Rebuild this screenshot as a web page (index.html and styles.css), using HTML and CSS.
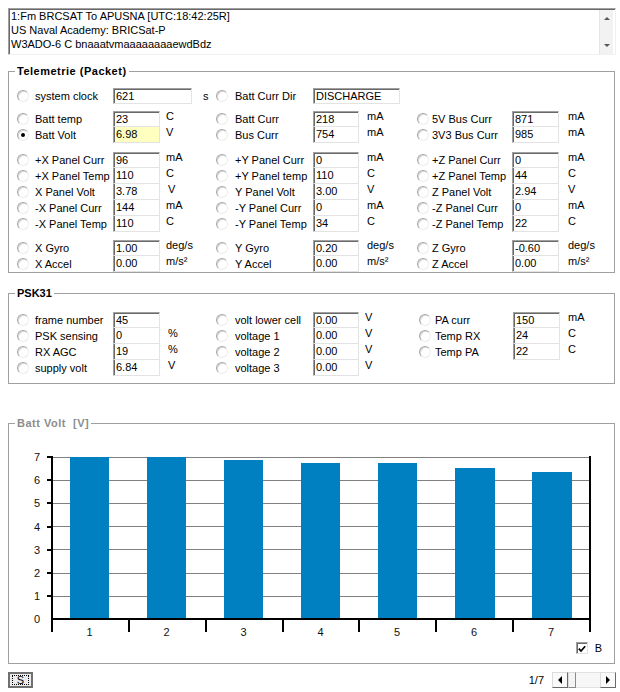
FILE: index.html
```html
<!DOCTYPE html>
<html>
<head>
<meta charset="utf-8">
<title>Telemetrie</title>
<link rel="stylesheet" href="styles.css">
</head>
<body>
<div class="app">
  <div class="log">
    <div class="log-text">
      <div>1:Fm BRCSAT To APUSNA [UTC:18:42:25R]</div>
      <div>US Naval Academy: BRICSat-P</div>
      <div>W3ADO-6 C bnaaatvmaaaaaaaaewdBdz</div>
    </div>
    <div class="vscroll"><span class="arr-up"></span><span class="arr-down"></span></div>
  </div>

  <div class="group tele">
    <span class="legend">Telemetrie (Packet)</span>
    <div class="blk b0">
      <div class="row">
        <div class="cell c1"><span class="radio"></span><span class="lbl">system clock</span><span class="box w79">621</span><span class="unit us">s</span></div>
        <div class="cell c2"><span class="radio"></span><span class="lbl">Batt Curr Dir</span><span class="box w87">DISCHARGE</span></div>
        <div class="cell c3"></div>
      </div>
    </div>
    <div class="blk bA">
      <div class="row">
        <div class="cell c1"><span class="radio"></span><span class="lbl">Batt temp</span><span class="box">23</span><span class="unit">C</span></div>
        <div class="cell c2"><span class="radio"></span><span class="lbl">Batt Curr</span><span class="box">218</span><span class="unit">mA</span></div>
        <div class="cell c3"><span class="radio"></span><span class="lbl">5V Bus Curr</span><span class="box">871</span><span class="unit">mA</span></div>
      </div>
      <div class="row">
        <div class="cell c1"><span class="radio on"></span><span class="lbl">Batt Volt</span><span class="box yel">6.98</span><span class="unit">V</span></div>
        <div class="cell c2"><span class="radio"></span><span class="lbl">Bus Curr</span><span class="box">754</span><span class="unit">mA</span></div>
        <div class="cell c3"><span class="radio"></span><span class="lbl">3V3 Bus Curr</span><span class="box">985</span><span class="unit">mA</span></div>
      </div>
    </div>
    <div class="blk bB">
      <div class="row">
        <div class="cell c1"><span class="radio"></span><span class="lbl">+X Panel Curr</span><span class="box">96</span><span class="unit">mA</span></div>
        <div class="cell c2"><span class="radio"></span><span class="lbl">+Y Panel Curr</span><span class="box">0</span><span class="unit">mA</span></div>
        <div class="cell c3"><span class="radio"></span><span class="lbl">+Z Panel Curr</span><span class="box">0</span><span class="unit">mA</span></div>
      </div>
      <div class="row">
        <div class="cell c1"><span class="radio"></span><span class="lbl">+X Panel Temp</span><span class="box">110</span><span class="unit">C</span></div>
        <div class="cell c2"><span class="radio"></span><span class="lbl">+Y Panel temp</span><span class="box">110</span><span class="unit">C</span></div>
        <div class="cell c3"><span class="radio"></span><span class="lbl">+Z Panel Temp</span><span class="box">44</span><span class="unit">C</span></div>
      </div>
      <div class="row">
        <div class="cell c1"><span class="radio"></span><span class="lbl">X Panel Volt</span><span class="box">3.78</span><span class="unit uv">V</span></div>
        <div class="cell c2"><span class="radio"></span><span class="lbl">Y Panel Volt</span><span class="box">3.00</span><span class="unit">V</span></div>
        <div class="cell c3"><span class="radio"></span><span class="lbl">Z Panel Volt</span><span class="box">2.94</span><span class="unit">V</span></div>
      </div>
      <div class="row">
        <div class="cell c1"><span class="radio"></span><span class="lbl">-X Panel Curr</span><span class="box">144</span><span class="unit">mA</span></div>
        <div class="cell c2"><span class="radio"></span><span class="lbl">-Y Panel Curr</span><span class="box">0</span><span class="unit">mA</span></div>
        <div class="cell c3"><span class="radio"></span><span class="lbl">-Z Panel Curr</span><span class="box">0</span><span class="unit">mA</span></div>
      </div>
      <div class="row">
        <div class="cell c1"><span class="radio"></span><span class="lbl">-X Panel Temp</span><span class="box">110</span><span class="unit">C</span></div>
        <div class="cell c2"><span class="radio"></span><span class="lbl">-Y Panel Temp</span><span class="box">34</span><span class="unit">C</span></div>
        <div class="cell c3"><span class="radio"></span><span class="lbl">-Z Panel Temp</span><span class="box">22</span><span class="unit">C</span></div>
      </div>
    </div>
    <div class="blk bC">
      <div class="row">
        <div class="cell c1"><span class="radio"></span><span class="lbl">X Gyro</span><span class="box">1.00</span><span class="unit">deg/s</span></div>
        <div class="cell c2"><span class="radio"></span><span class="lbl">Y Gyro</span><span class="box">0.20</span><span class="unit">deg/s</span></div>
        <div class="cell c3"><span class="radio"></span><span class="lbl">Z Gyro</span><span class="box">-0.60</span><span class="unit">deg/s</span></div>
      </div>
      <div class="row">
        <div class="cell c1"><span class="radio"></span><span class="lbl">X Accel</span><span class="box">0.00</span><span class="unit">m/s²</span></div>
        <div class="cell c2"><span class="radio"></span><span class="lbl">Y Accel</span><span class="box">0.00</span><span class="unit">m/s²</span></div>
        <div class="cell c3"><span class="radio"></span><span class="lbl">Z Accel</span><span class="box">0.00</span><span class="unit">m/s²</span></div>
      </div>
    </div>
  </div>

  <div class="group psk">
    <span class="legend">PSK31</span>
    <div class="blk">
      <div class="row">
        <div class="cell c1"><span class="radio"></span><span class="lbl">frame number</span><span class="box">45</span></div>
        <div class="cell c2"><span class="radio"></span><span class="lbl">volt lower cell</span><span class="box">0.00</span><span class="unit">V</span></div>
        <div class="cell c3"><span class="radio"></span><span class="lbl">PA curr</span><span class="box">150</span><span class="unit">mA</span></div>
      </div>
      <div class="row">
        <div class="cell c1"><span class="radio"></span><span class="lbl">PSK sensing</span><span class="box">0</span><span class="unit">%</span></div>
        <div class="cell c2"><span class="radio"></span><span class="lbl">voltage 1</span><span class="box">0.00</span><span class="unit">V</span></div>
        <div class="cell c3"><span class="radio"></span><span class="lbl">Temp RX</span><span class="box">24</span><span class="unit">C</span></div>
      </div>
      <div class="row">
        <div class="cell c1"><span class="radio"></span><span class="lbl">RX AGC</span><span class="box">19</span><span class="unit">%</span></div>
        <div class="cell c2"><span class="radio"></span><span class="lbl">voltage 2</span><span class="box">0.00</span><span class="unit">V</span></div>
        <div class="cell c3"><span class="radio"></span><span class="lbl">Temp PA</span><span class="box">22</span><span class="unit">C</span></div>
      </div>
      <div class="row">
        <div class="cell c1"><span class="radio"></span><span class="lbl">supply volt</span><span class="box">6.84</span><span class="unit">V</span></div>
        <div class="cell c2"><span class="radio"></span><span class="lbl">voltage 3</span><span class="box">0.00</span><span class="unit">V</span></div>
        <div class="cell c3"></div>
      </div>
    </div>
  </div>

  <div class="group chart">
    <span class="legend">Batt Volt&nbsp; [V]</span>
    <svg class="plot" width="605" height="216" viewBox="9 424 605 216" xmlns="http://www.w3.org/2000/svg">
      <g stroke="#808080" stroke-width="1">
        <line x1="53" y1="480.5" x2="589" y2="480.5"/>
        <line x1="53" y1="503.5" x2="589" y2="503.5"/>
        <line x1="53" y1="526.5" x2="589" y2="526.5"/>
        <line x1="53" y1="549.5" x2="589" y2="549.5"/>
        <line x1="53" y1="573.5" x2="589" y2="573.5"/>
        <line x1="53" y1="596.5" x2="589" y2="596.5"/>
        <line x1="53" y1="457.5" x2="589" y2="457.5"/>
      </g>
      <g fill="#007fc1">
        <rect x="70" y="457" width="39" height="162"/>
        <rect x="147" y="457" width="39" height="162"/>
        <rect x="224" y="460" width="39" height="159"/>
        <rect x="301" y="463" width="39" height="156"/>
        <rect x="378" y="463" width="39" height="156"/>
        <rect x="455" y="468" width="40" height="151"/>
        <rect x="532" y="472" width="40" height="147"/>
      </g>
      <g stroke="#000" stroke-width="2">
        <line x1="52" y1="456" x2="52" y2="620"/>
        <line x1="590" y1="456" x2="590" y2="632"/>
        <line x1="51" y1="619" x2="591" y2="619"/>
        <line x1="47" y1="457" x2="52" y2="457"/>
        <line x1="47" y1="480" x2="52" y2="480"/>
        <line x1="47" y1="503" x2="52" y2="503"/>
        <line x1="47" y1="527" x2="52" y2="527"/>
        <line x1="47" y1="550" x2="52" y2="550"/>
        <line x1="47" y1="573" x2="52" y2="573"/>
        <line x1="47" y1="596" x2="52" y2="596"/>
        <line x1="52" y1="619" x2="52" y2="632"/>
        <line x1="129" y1="619" x2="129" y2="632"/>
        <line x1="206" y1="619" x2="206" y2="632"/>
        <line x1="283" y1="619" x2="283" y2="632"/>
        <line x1="359" y1="619" x2="359" y2="632"/>
        <line x1="436" y1="619" x2="436" y2="632"/>
        <line x1="513" y1="619" x2="513" y2="632"/>
      </g>
      <g class="ylab" text-anchor="end">
        <text x="40" y="461">7</text>
        <text x="40" y="484">6</text>
        <text x="40" y="507">5</text>
        <text x="40" y="531">4</text>
        <text x="40" y="554">3</text>
        <text x="40" y="577">2</text>
        <text x="40" y="600">1</text>
        <text x="40" y="623">0</text>
      </g>
      <g class="xlab" text-anchor="middle">
        <text x="89.5" y="636">1</text>
        <text x="166.5" y="636">2</text>
        <text x="243.5" y="636">3</text>
        <text x="320.5" y="636">4</text>
        <text x="397" y="636">5</text>
        <text x="474" y="636">6</text>
        <text x="551" y="636">7</text>
      </g>
    </svg>
    <div class="chk-row">
      <span class="chk"><svg width="8" height="8" viewBox="0 0 8 8"><path d="M0.8 3.6 L3 6 L7.2 1.2" fill="none" stroke="#000" stroke-width="1.7"/></svg></span>
      <span class="chk-lbl">B</span>
    </div>
  </div>

  <div class="bottom">
    <div class="btn"><span class="focus">S</span></div>
    <span class="pager">1/7</span>
    <div class="hscroll">
      <span class="sbtn"><span class="tri-l"></span></span>
      <span class="thumb"></span>
      <span class="track"></span>
      <span class="sbtn"><span class="tri-r"></span></span>
    </div>
  </div>
</div>
</body>
</html>
```

FILE: styles.css
```css
* { box-sizing: border-box; }
html, body { margin: 0; padding: 0; background: #fff; }
body {
  font-family: "Liberation Sans", Arial, sans-serif;
  font-size: 11px;
  color: #000;
  width: 620px;
  height: 692px;
  overflow: hidden;
}
.app { padding: 8px 0 0 8px; }

/* log text area */
.log {
  width: 608px;
  height: 47px;
  display: flex;
  border: 1px solid;
  border-color: #a0a0a0 #f0f0f0 #f0f0f0 #a0a0a0;
  box-shadow: inset 1px 1px 0 #696969;
}
.log-text {
  flex: 1;
  line-height: 14px;
  padding-left: 2px;
  white-space: nowrap;
}
.vscroll {
  width: 14px;
  margin: 1px 2px 0 0;
  background: #f2f2f2;
  border-left: 1px solid #e6e6e6;
  display: flex;
  flex-direction: column;
  justify-content: space-between;
  align-items: center;
  padding: 7px 0 7px;
}
.arr-up, .arr-down {
  width: 0; height: 0;
  border-left: 3px solid transparent;
  border-right: 3px solid transparent;
}
.arr-up { border-bottom: 3px solid #555; }
.arr-down { border-top: 3px solid #555; }

/* group boxes */
.group {
  position: relative;
  width: 607px;
  border: 1px solid #a0a0a0;
}
.legend {
  position: absolute;
  top: -7px;
  left: 6px;
  padding: 0 2px;
  background: #fff;
  line-height: 13px;
  font-weight: bold;
  white-space: nowrap;
}
.tele { margin-top: 16px; height: 202px; padding-left: 8px; }
.tele .legend { letter-spacing: 0.5px; }
.b0 { margin-top: 16px; }
.bA { margin-top: 7px; }
.bB { margin-top: 9px; }
.bC { margin-top: 8px; }

.psk { margin-top: 20px; height: 91px; padding: 18px 0 0 8px; }

.row {
  display: grid;
  grid-template-columns: 199px 201px 1fr;
  height: 16px;
}
.psk .row { grid-template-columns: 199px 203px 1fr; }

.cell { display: flex; align-items: center; height: 16px; }
.radio {
  position: relative;
  flex: none;
  width: 12px;
  height: 12px;
  border-radius: 50%;
  border: 1px solid;
  border-color: #a8a8a8 #ececec #ececec #a8a8a8;
  background: #fff;
  box-shadow: inset 1px 1px 0 #d8d8d8;
}
.radio.on::after {
  content: "";
  position: absolute;
  left: 3px;
  top: 3px;
  width: 4px;
  height: 4px;
  border-radius: 50%;
  background: #000;
}
.lbl { flex: none; white-space: nowrap; line-height: 16px; }
.box {
  flex: none;
  width: 47px;
  height: 16px;
  border-left: 1px solid #a0a0a0;
  border-right: 1px solid #e3e3e3;
  border-bottom: 1px solid #e3e3e3;
  box-shadow: inset 1px 0 0 #696969;
  padding-left: 2px;
  line-height: 15px;
  white-space: nowrap;
  overflow: hidden;
  background: #fff;
}
.row:first-child .box {
  border-top: 1px solid #a0a0a0;
  box-shadow: inset 1px 1px 0 #696969;
  padding-top: 1px;
  line-height: 13px;
}
.box.yel { background: #ffffc0; }
.box.w79 { width: 79px; }
.box.w87 { width: 87px; }
.unit { align-self: flex-start; line-height: 11px; white-space: nowrap; }
.unit.us { align-self: center; line-height: 16px; }

.c1 .radio { margin-right: 6px; }
.c1 .lbl { width: 78px; }
.c1 .unit { margin-left: 6px; }
.c1 .unit.us { margin-left: 11px; }
.c1 .unit.uv { margin-left: 8px; }
.c2 .radio { margin-right: 7px; }
.c2 .lbl { width: 78px; }
.c2 .box { width: 46px; }
.c2 .box.w87 { width: 87px; }
.c2 .unit { margin-left: 8px; }
.c3 .radio { margin-right: 3px; }
.c3 .lbl { width: 80px; }
.c3 .unit { margin-left: 9px; }

.psk .c1 .unit { margin-left: 8px; }
.psk .c2 .unit { margin-left: 6px; }
.psk .c3 .radio { margin-right: 4px; }
.psk .c3 .lbl { width: 78px; }
.psk .c3 .unit { margin-left: 8px; }

/* chart */
.chart { margin-top: 39px; height: 241px; }
.chart .legend { color: #8c8c8c; letter-spacing: 0.5px; }
.plot { display: block; }
.plot text {
  font-family: "Liberation Sans", Arial, sans-serif;
  font-size: 11px;
  fill: #111;
}
.chk-row {
  display: flex;
  justify-content: flex-end;
  align-items: center;
  height: 22px;
  padding: 0 12px 6px 0;
}
.chk {
  width: 12px;
  height: 12px;
  border: 1px solid;
  border-color: #a0a0a0 #e3e3e3 #e3e3e3 #a0a0a0;
  box-shadow: inset 1px 1px 0 #696969;
  background: #fff;
  display: flex;
  align-items: center;
  justify-content: center;
  padding: 1px 0 0 1px;
}
.chk svg { display: block; }
.chk-lbl { margin-left: 7px; line-height: 12px; }

/* bottom bar */
.bottom {
  margin-top: 8px;
  width: 608px;
  height: 16px;
  display: flex;
  align-items: center;
}
.btn {
  width: 25px;
  height: 16px;
  border: 2px solid #707070;
  background: #ececec;
  display: flex;
  align-items: center;
  justify-content: center;
}
.focus {
  width: 17px;
  height: 10px;
  border: 1px dotted #000;
  line-height: 8px;
  text-align: center;
}
.pager { margin-left: auto; margin-right: 8px; line-height: 16px; }
.hscroll { display: flex; width: 64px; height: 16px; }
.sbtn {
  width: 16px;
  height: 16px;
  border: 1px solid;
  border-color: #dcdcdc #6a6a6a #6a6a6a #dcdcdc;
  background: #fafafa;
  display: flex;
  align-items: center;
  justify-content: center;
}
.thumb {
  width: 8px;
  height: 16px;
  border: 1px solid;
  border-color: #dcdcdc #8a8a8a #8a8a8a #dcdcdc;
  background: #f4f4f4;
}
.track {
  flex: 1;
  height: 16px;
  background: #f7f7f7;
  border-top: 1px solid #e2e2e2;
  border-bottom: 1px solid #e2e2e2;
}
.tri-l, .tri-r { width: 0; height: 0; border-top: 4px solid transparent; border-bottom: 4px solid transparent; }
.tri-l { border-right: 4px solid #000; }
.tri-r { border-left: 4px solid #000; }
```
